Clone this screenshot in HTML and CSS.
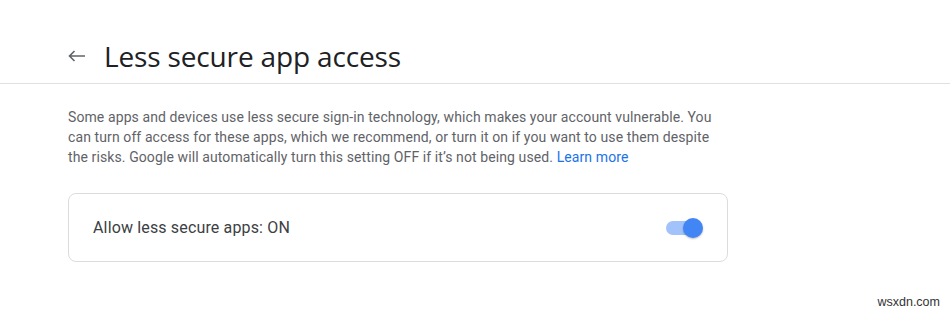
FILE: index.html
```html
<!DOCTYPE html>
<html>
<head>
<meta charset="utf-8">
<link rel="stylesheet" href="styles.css">
</head>
<body>
<header class="topbar">
  <svg class="back" width="18" height="12" viewBox="0 0 18 12">
    <path d="M17 6H1.5M6.5 1L1.5 6l5 5" fill="none" stroke="#5f6368" stroke-width="1.6"/>
  </svg>
  <h1 class="title">Less secure app access</h1>
</header>
<main class="content">
  <p class="desc">Some apps and devices use less secure sign-in technology, which makes your account vulnerable. You can turn off access for these apps, which we recommend, or turn it on if you want to use them despite the risks. Google will automatically turn this setting OFF if it’s not being used. <a class="link" href="#">Learn more</a></p>
  <div class="card">
    <span class="label">Allow less secure apps: ON</span>
    <span class="toggle"><span class="track"></span><span class="knob"></span></span>
  </div>
</main>
<div class="watermark">wsxdn.com</div>
</body>
</html>
```
FILE: styles.css
```css
html, body {
  margin: 0;
  padding: 0;
  background: #fff;
  width: 950px;
  height: 314px;
  overflow: hidden;
  position: relative;
  font-family: Roboto, "Noto Sans", sans-serif;
}
.topbar {
  display: flex;
  align-items: center;
  box-sizing: border-box;
  height: 84px;
  border-bottom: 1px solid #e0e0e0;
  padding-left: 68px;
  padding-top: 28px;
}
.back {
  display: block;
  margin-right: 18px;
}
.title {
  margin: 0;
  font-family: "Open Sans", sans-serif;
  font-weight: 400;
  font-size: 28px;
  color: #202124;
  letter-spacing: -0.15px;
}
.content {
  width: 660px;
  margin-left: 68px;
  padding-top: 23px;
}
.desc {
  margin: 0;
  width: 660px;
  font-size: 14px;
  line-height: 20px;
  letter-spacing: 0.1px;
  color: #5f6368;
}
.link {
  color: #1a73e8;
  text-decoration: none;
}
.card {
  margin-top: 26px;
  height: 69px;
  box-sizing: border-box;
  border: 1px solid #dadce0;
  border-radius: 8px;
  display: flex;
  align-items: center;
  justify-content: space-between;
  padding: 0 24px 0 24px;
}
.label {
  font-size: 16px;
  letter-spacing: 0.15px;
  color: #3c4043;
}
.toggle {
  position: relative;
  width: 37px;
  height: 20px;
  display: block;
}
.track {
  position: absolute;
  left: 0;
  top: 3px;
  width: 34px;
  height: 14px;
  border-radius: 7px;
  background: #a1c2fa;
}
.knob {
  position: absolute;
  right: 0;
  top: 0;
  width: 20px;
  height: 20px;
  border-radius: 50%;
  background: #4285f4;
  box-shadow: 0 1px 2px rgba(0,0,0,0.25);
}
.watermark {
  position: absolute;
  right: 10px;
  bottom: 5px;
  font-family: "Liberation Sans", Arial, sans-serif;
  font-size: 12.5px;
  color: #333;
}
```
